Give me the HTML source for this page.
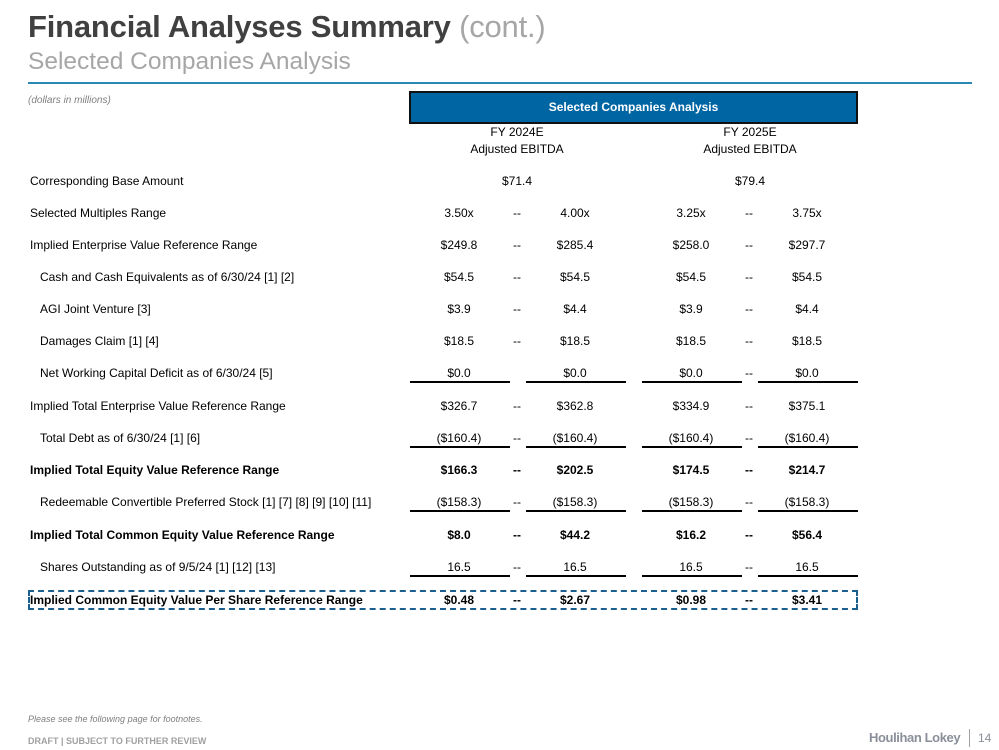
<!DOCTYPE html>
<html><head><meta charset="utf-8">
<style>
*{margin:0;padding:0;box-sizing:border-box}
body{width:999px;height:750px;background:#fff;position:relative;overflow:hidden;font-family:"Liberation Sans",Arial,sans-serif;color:#000}
.a{position:absolute;white-space:nowrap}
.t1{left:28px;top:9px;font-size:31px;font-weight:bold;color:#404040;letter-spacing:-0.2px}
.t1 span{font-weight:normal;color:#a6a6a6}
.t2{left:28px;top:48px;font-size:24.5px;color:#a6a6a6}
.rule{left:28px;top:82px;width:944px;height:1.5px;background:#2a88b5}
.dm{left:28px;top:95px;font-size:10px;font-style:italic;color:#7f7f7f}
.hdr{left:409px;top:91px;width:449px;height:33px;background:#0065a3;border:2px solid #111;color:#fff;font-weight:bold;font-size:12px;text-align:center;line-height:29px}
.ch{top:124px;width:200px;text-align:center;font-size:12px;line-height:17px}
.lb{font-size:12px;line-height:14px}
.v{font-size:12px;line-height:14px;width:100px;text-align:center}
.b{font-weight:bold}
.ul{height:2px;background:#000;width:100px}
.box{left:28px;top:590px;width:830px;height:20px;border:2px dashed #1a5f8e}
.fn{left:28px;top:714px;font-size:9px;font-style:italic;color:#7f7f7f}
.dr{left:28px;top:736px;font-size:9px;font-weight:bold;color:#a0a0a0}
.logo{left:869px;top:730px;font-size:13px;font-weight:bold;color:#8a8f99;letter-spacing:-0.4px}
.bar{left:969px;top:729px;width:1px;height:18px;background:#a0a0a0}
.pg{left:978px;top:731px;font-size:12px;color:#8a8f99}
</style></head><body>
<div class="a t1">Financial Analyses Summary <span>(cont.)</span></div>
<div class="a t2">Selected Companies Analysis</div>
<div class="a rule"></div>
<div class="a dm">(dollars in millions)</div>
<div class="a hdr">Selected Companies Analysis</div>
<div class="a ch" style="left:417px">FY 2024E<br>Adjusted EBITDA</div>
<div class="a ch" style="left:650px">FY 2025E<br>Adjusted EBITDA</div>

<div class="a lb" style="left:30px;top:174px">Corresponding Base Amount</div>
<div class="a v" style="left:467px;top:174px">$71.4</div>
<div class="a v" style="left:700px;top:174px">$79.4</div>

<div class="a lb" style="left:30px;top:206px">Selected Multiples Range</div>
<div class="a v" style="left:409px;top:206px">3.50x</div><div class="a v" style="left:467px;top:206px">--</div><div class="a v" style="left:525px;top:206px">4.00x</div>
<div class="a v" style="left:641px;top:206px">3.25x</div><div class="a v" style="left:699px;top:206px">--</div><div class="a v" style="left:757px;top:206px">3.75x</div>

<div class="a lb" style="left:30px;top:238px">Implied Enterprise Value Reference Range</div>
<div class="a v" style="left:409px;top:238px">$249.8</div><div class="a v" style="left:467px;top:238px">--</div><div class="a v" style="left:525px;top:238px">$285.4</div>
<div class="a v" style="left:641px;top:238px">$258.0</div><div class="a v" style="left:699px;top:238px">--</div><div class="a v" style="left:757px;top:238px">$297.7</div>

<div class="a lb" style="left:40px;top:270px">Cash and Cash Equivalents as of 6/30/24 [1] [2]</div>
<div class="a v" style="left:409px;top:270px">$54.5</div><div class="a v" style="left:467px;top:270px">--</div><div class="a v" style="left:525px;top:270px">$54.5</div>
<div class="a v" style="left:641px;top:270px">$54.5</div><div class="a v" style="left:699px;top:270px">--</div><div class="a v" style="left:757px;top:270px">$54.5</div>

<div class="a lb" style="left:40px;top:302px">AGI Joint Venture [3]</div>
<div class="a v" style="left:409px;top:302px">$3.9</div><div class="a v" style="left:467px;top:302px">--</div><div class="a v" style="left:525px;top:302px">$4.4</div>
<div class="a v" style="left:641px;top:302px">$3.9</div><div class="a v" style="left:699px;top:302px">--</div><div class="a v" style="left:757px;top:302px">$4.4</div>

<div class="a lb" style="left:40px;top:334px">Damages Claim [1] [4]</div>
<div class="a v" style="left:409px;top:334px">$18.5</div><div class="a v" style="left:467px;top:334px">--</div><div class="a v" style="left:525px;top:334px">$18.5</div>
<div class="a v" style="left:641px;top:334px">$18.5</div><div class="a v" style="left:699px;top:334px">--</div><div class="a v" style="left:757px;top:334px">$18.5</div>

<div class="a lb" style="left:40px;top:366px">Net Working Capital Deficit as of 6/30/24 [5]</div>
<div class="a v" style="left:409px;top:366px">$0.0</div><div class="a v" style="left:525px;top:366px">$0.0</div>
<div class="a v" style="left:641px;top:366px">$0.0</div><div class="a v" style="left:699px;top:366px">--</div><div class="a v" style="left:757px;top:366px">$0.0</div>
<div class="a ul" style="left:410px;top:381px"></div><div class="a ul" style="left:526px;top:381px"></div><div class="a ul" style="left:642px;top:381px"></div><div class="a ul" style="left:758px;top:381px"></div>

<div class="a lb" style="left:30px;top:399px">Implied Total Enterprise Value Reference Range</div>
<div class="a v" style="left:409px;top:399px">$326.7</div><div class="a v" style="left:467px;top:399px">--</div><div class="a v" style="left:525px;top:399px">$362.8</div>
<div class="a v" style="left:641px;top:399px">$334.9</div><div class="a v" style="left:699px;top:399px">--</div><div class="a v" style="left:757px;top:399px">$375.1</div>

<div class="a lb" style="left:40px;top:431px">Total Debt as of 6/30/24 [1] [6]</div>
<div class="a v" style="left:409px;top:431px">($160.4)</div><div class="a v" style="left:467px;top:431px">--</div><div class="a v" style="left:525px;top:431px">($160.4)</div>
<div class="a v" style="left:641px;top:431px">($160.4)</div><div class="a v" style="left:699px;top:431px">--</div><div class="a v" style="left:757px;top:431px">($160.4)</div>
<div class="a ul" style="left:410px;top:446px"></div><div class="a ul" style="left:526px;top:446px"></div><div class="a ul" style="left:642px;top:446px"></div><div class="a ul" style="left:758px;top:446px"></div>

<div class="a lb b" style="left:30px;top:463px">Implied Total Equity Value Reference Range</div>
<div class="a v b" style="left:409px;top:463px">$166.3</div><div class="a v b" style="left:467px;top:463px">--</div><div class="a v b" style="left:525px;top:463px">$202.5</div>
<div class="a v b" style="left:641px;top:463px">$174.5</div><div class="a v b" style="left:699px;top:463px">--</div><div class="a v b" style="left:757px;top:463px">$214.7</div>

<div class="a lb" style="left:40px;top:495px">Redeemable Convertible Preferred Stock [1] [7] [8] [9] [10] [11]</div>
<div class="a v" style="left:409px;top:495px">($158.3)</div><div class="a v" style="left:467px;top:495px">--</div><div class="a v" style="left:525px;top:495px">($158.3)</div>
<div class="a v" style="left:641px;top:495px">($158.3)</div><div class="a v" style="left:699px;top:495px">--</div><div class="a v" style="left:757px;top:495px">($158.3)</div>
<div class="a ul" style="left:410px;top:510px"></div><div class="a ul" style="left:526px;top:510px"></div><div class="a ul" style="left:642px;top:510px"></div><div class="a ul" style="left:758px;top:510px"></div>

<div class="a lb b" style="left:30px;top:528px">Implied Total Common Equity Value Reference Range</div>
<div class="a v b" style="left:409px;top:528px">$8.0</div><div class="a v b" style="left:467px;top:528px">--</div><div class="a v b" style="left:525px;top:528px">$44.2</div>
<div class="a v b" style="left:641px;top:528px">$16.2</div><div class="a v b" style="left:699px;top:528px">--</div><div class="a v b" style="left:757px;top:528px">$56.4</div>

<div class="a lb" style="left:40px;top:560px">Shares Outstanding as of 9/5/24 [1] [12] [13]</div>
<div class="a v" style="left:409px;top:560px">16.5</div><div class="a v" style="left:467px;top:560px">--</div><div class="a v" style="left:525px;top:560px">16.5</div>
<div class="a v" style="left:641px;top:560px">16.5</div><div class="a v" style="left:699px;top:560px">--</div><div class="a v" style="left:757px;top:560px">16.5</div>
<div class="a ul" style="left:410px;top:575px"></div><div class="a ul" style="left:526px;top:575px"></div><div class="a ul" style="left:642px;top:575px"></div><div class="a ul" style="left:758px;top:575px"></div>

<div class="a box"></div>
<div class="a lb b" style="left:30px;top:593px">Implied Common Equity Value Per Share Reference Range</div>
<div class="a v b" style="left:409px;top:593px">$0.48</div><div class="a v b" style="left:467px;top:593px">--</div><div class="a v b" style="left:525px;top:593px">$2.67</div>
<div class="a v b" style="left:641px;top:593px">$0.98</div><div class="a v b" style="left:699px;top:593px">--</div><div class="a v b" style="left:757px;top:593px">$3.41</div>

<div class="a fn">Please see the following page for footnotes.</div>
<div class="a dr">DRAFT | SUBJECT TO FURTHER REVIEW</div>
<div class="a logo">Houlihan Lokey</div>
<div class="a bar"></div>
<div class="a pg">14</div>
</body></html>
